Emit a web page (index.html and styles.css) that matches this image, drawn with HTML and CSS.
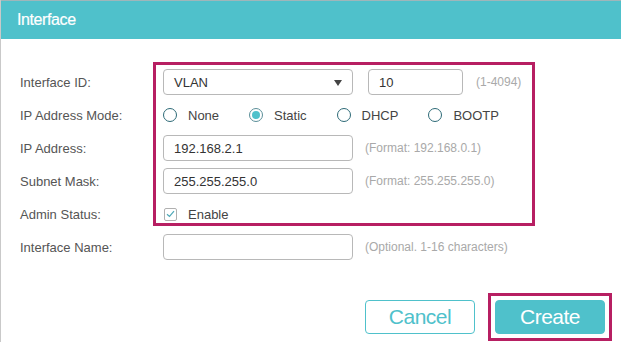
FILE: index.html
```html
<!DOCTYPE html>
<html>
<head>
<meta charset="utf-8">
<link rel="stylesheet" href="styles.css">
</head>
<body>
<div class="dialog">
  <div class="header"><span class="title">Interface</span></div>
  <div class="form">
    <div class="labels">
      <div class="label">Interface ID:</div>
      <div class="label">IP Address Mode:</div>
      <div class="label">IP Address:</div>
      <div class="label">Subnet Mask:</div>
      <div class="label">Admin Status:</div>
      <div class="label">Interface Name:</div>
    </div>
    <div class="controls">
      <div class="highlight">
        <div class="row">
          <div class="select"><span>VLAN</span><span class="arrow"></span></div>
          <div class="input small">10</div>
          <span class="hint">(1-4094)</span>
        </div>
        <div class="row radios">
          <label class="radio"><span class="dot"></span>None</label>
          <label class="radio checked"><span class="dot"></span>Static</label>
          <label class="radio"><span class="dot"></span>DHCP</label>
          <label class="radio"><span class="dot"></span>BOOTP</label>
        </div>
        <div class="row">
          <div class="input">192.168.2.1</div>
          <span class="hint wide">(Format: 192.168.0.1)</span>
        </div>
        <div class="row">
          <div class="input">255.255.255.0</div>
          <span class="hint wide">(Format: 255.255.255.0)</span>
        </div>
        <div class="row last">
          <label class="check">
            <span class="box"><svg width="9" height="8" viewBox="0 0 9 8"><path d="M1 4.2 L3.5 6.5 L8 1.2" fill="none" stroke="#4fa9b8" stroke-width="1.2"/></svg></span>Enable
          </label>
        </div>
      </div>
      <div class="row name-row">
        <div class="input"></div>
        <span class="hint wide">(Optional. 1-16 characters)</span>
      </div>
    </div>
  </div>
  <div class="actions">
    <button class="btn cancel">Cancel</button>
    <div class="mark"><button class="btn create">Create</button></div>
  </div>
</div>
</body>
</html>
```
FILE: styles.css
```css
html, body {
  margin: 0;
  padding: 0;
  background: #fff;
}
.dialog {
  width: 621px;
  height: 342px;
  box-sizing: border-box;
  border-left: 1px solid #c9c9c9;
  font-family: "Liberation Sans", Arial, sans-serif;
  overflow: hidden;
}
.header {
  height: 39px;
  box-sizing: border-box;
  background: #4fc1cb;
  border-top: 1px solid #9fb6ba;
  display: flex;
  align-items: center;
  padding-left: 16px;
}
.title {
  color: #fff;
  font-size: 16px;
  letter-spacing: -0.4px;
  padding-bottom: 1px;
  -webkit-text-stroke: 0.2px #fff;
}
.form {
  display: flex;
  padding: 30px 0 0 19px;
}
.labels {
  width: 143px;
  display: flex;
  flex-direction: column;
  gap: 7px;
}
.label {
  height: 26px;
  display: flex;
  align-items: center;
  font-size: 13px;
  color: #555;
}
.controls {
  display: flex;
  flex-direction: column;
}
.highlight {
  margin: -7px 0 0 -10px;
  width: 369px;
  border: 3px solid #b71f62;
  padding: 4px 0 0 7px;
  display: flex;
  flex-direction: column;
  gap: 7px;
}
.row {
  height: 26px;
  display: flex;
  align-items: center;
}
.row.last {
  height: 22px;
  padding-top: 4px;
  box-sizing: border-box;
}
.name-row {
  margin-top: 8px;
}
.select, .input {
  box-sizing: border-box;
  width: 190px;
  height: 26px;
  border: 1px solid #b8b8b8;
  border-radius: 4px;
  padding-left: 10px;
  font-size: 13px;
  color: #333;
  display: flex;
  align-items: center;
}
.select {
  justify-content: space-between;
  padding-right: 10px;
}
.arrow {
  width: 0;
  height: 0;
  border-left: 4.5px solid transparent;
  border-right: 4.5px solid transparent;
  border-top: 6px solid #444;
  margin-top: 1px;
}
.input.small {
  width: 95px;
  margin-left: 15px;
}
.hint {
  font-size: 12px;
  color: #a9a9a9;
  margin-left: 13px;
}
.hint.wide {
  margin-left: 12px;
}
.radios {
  gap: 30px;
}
.radio {
  display: flex;
  align-items: center;
  gap: 11px;
  font-size: 13px;
  color: #444;
}
.dot {
  box-sizing: border-box;
  width: 14px;
  height: 14px;
  border-radius: 50%;
  border: 1.3px solid #2d6a77;
  display: flex;
  align-items: center;
  justify-content: center;
}
.radio.checked .dot {
  border-color: #5b8f99;
}
.radio.checked .dot::after {
  content: "";
  width: 8px;
  height: 8px;
  border-radius: 50%;
  background: #4fc1cb;
}
.check {
  display: flex;
  align-items: center;
  gap: 11px;
  font-size: 13px;
  color: #444;
  margin-left: 1px;
}
.box {
  box-sizing: border-box;
  width: 13px;
  height: 13px;
  border: 1px solid #b0b0b0;
  border-radius: 2px;
  display: flex;
  align-items: center;
  justify-content: center;
}
.actions {
  display: flex;
  justify-content: flex-end;
  align-items: center;
  gap: 13px;
  padding-right: 9px;
  margin-top: 33px;
}
.mark {
  border: 3px solid #b71f62;
  padding: 4px;
  display: flex;
}
.btn {
  box-sizing: border-box;
  width: 110px;
  height: 34px;
  border-radius: 4px;
  font-family: "Liberation Sans", Arial, sans-serif;
  font-size: 21px;
  letter-spacing: -0.5px;
  padding: 0;
  cursor: pointer;
}
.cancel {
  background: #fff;
  border: 1px solid #4fc1cb;
  color: #4fc1cb;
}
.create {
  background: #4fc1cb;
  border: 1px solid #4fc1cb;
  color: #fff;
}
```
